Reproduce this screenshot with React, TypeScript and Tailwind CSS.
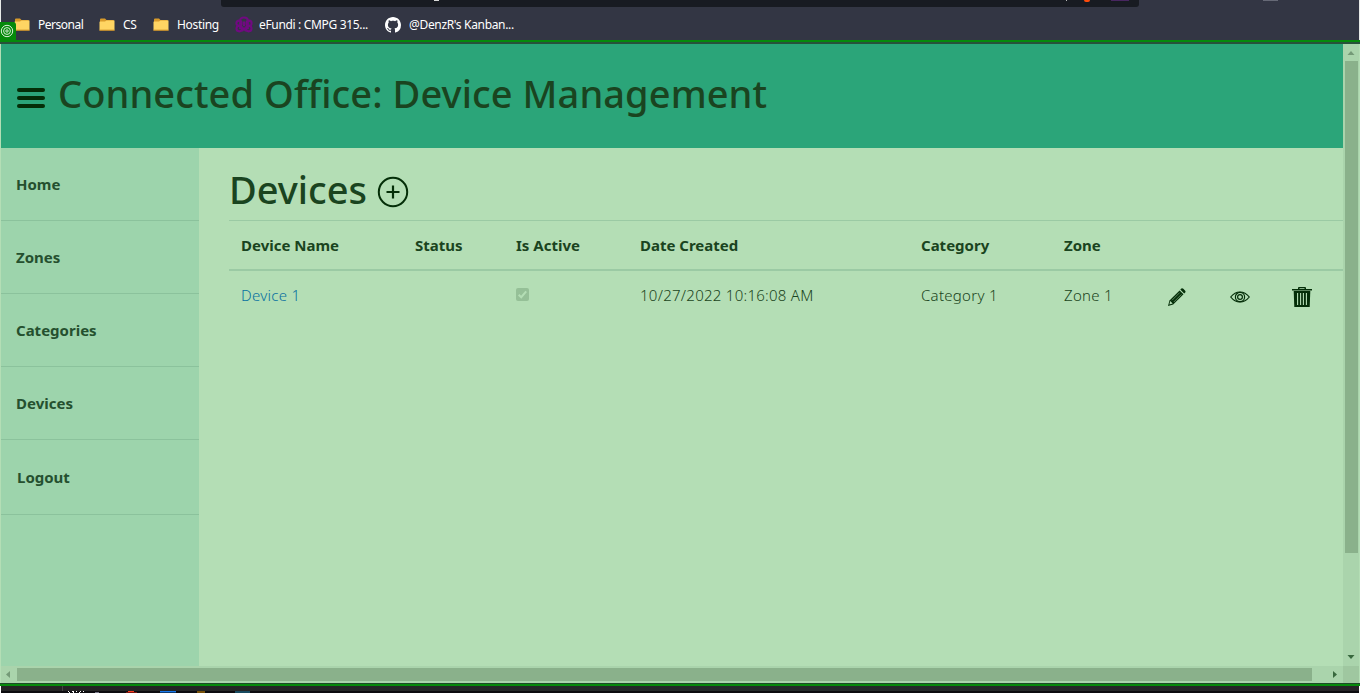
import React from 'react';

const Folder = () => (
  <svg width="16" height="14" viewBox="0 0 16 14" className="block shrink-0">
    <path d="M1 1.5Q1 .5 2 .5H6L7.5 2H14Q15 2 15 3V12H1Z" fill="#d99b2b" />
    <path d="M.5 4Q.5 3.5 1 3.5H6L7.5 2.5H15.5V12.5H.5Z" fill="#ffd563" />
    <path d="M.5 12.2H15.5" stroke="#c98a22" />
  </svg>
);

const Knot = () => (
  <svg width="18" height="17" viewBox="0 0 18 17" className="block shrink-0" fill="none" stroke="#700a80" strokeWidth="2.1">
    <path d="M5.2 13V4.5Q5.2 1.5 9 1.5T12.8 4.5V13" />
    <circle cx="4" cy="7.2" r="2.6" /><circle cx="14" cy="7.2" r="2.6" />
    <circle cx="4.3" cy="12.6" r="2.8" /><circle cx="13.7" cy="12.6" r="2.8" />
    <path d="M9 5.5V10M7 15L9 12.5L11 15" />
  </svg>
);

const Github = () => (
  <svg width="16" height="16" viewBox="0 0 16 16" className="block shrink-0" fill="#fff">
    <path d="M8 0C3.58 0 0 3.58 0 8c0 3.54 2.29 6.53 5.47 7.59.4.07.55-.17.55-.38 0-.19-.01-.82-.01-1.49-2.01.37-2.53-.49-2.69-.94-.09-.23-.48-.94-.82-1.13-.28-.15-.68-.52-.01-.53.63-.01 1.08.58 1.23.82.72 1.21 1.87.87 2.33.66.07-.52.28-.87.51-1.07-1.78-.2-3.64-.89-3.64-3.95 0-.87.31-1.59.82-2.15-.08-.2-.36-1.02.08-2.12 0 0 .67-.21 2.2.82.64-.18 1.32-.27 2-.27s1.36.09 2 .27c1.53-1.04 2.2-.82 2.2-.82.44 1.1.16 1.92.08 2.12.51.56.82 1.27.82 2.15 0 3.07-1.87 3.75-3.65 3.95.29.25.54.73.54 1.48 0 1.07-.01 1.93-.01 2.2 0 .21.15.46.55.38A8.01 8.01 0 0 0 16 8c0-4.42-3.58-8-8-8Z" />
  </svg>
);

const Pencil = () => (
  <svg width="20" height="20" viewBox="0 0 20 20" className="mt-[2px] block" fill="#042e08">
    <path d="M14.4 1.6Q15.2.8 16.3 1.8L18.2 3.7Q19 4.7 18.2 5.5L17.2 6.5L13.3 2.6Z" />
    <path d="M12.6 3.4L16.5 7.3L6.2 17.5L1 19L2.5 13.5Z" />
    <path d="M3.2 14.1L5.7 16.6L2.4 17.6Z" fill="#b4deb5" />
    <path d="M5 13.3L12.7 5.6M6.8 15L14.4 7.4" stroke="#b4deb5" strokeWidth=".5" />
  </svg>
);

const Eye = () => (
  <svg width="20" height="12" viewBox="0 0 20 12" className="mt-[2px] ml-px block" fill="none" stroke="#042e08" strokeWidth="1.2">
    <path d="M.7 6Q4.7 1 10 1T19.3 6Q15.3 11 10 11T.7 6Z" />
    <circle cx="10" cy="6" r="4.6" /><circle cx="10" cy="6" r="2.4" />
  </svg>
);

const Trash = () => (
  <svg width="20" height="20" viewBox="0 0 20 20" className="mt-[2px] ml-px block" fill="#042e08">
    <path d="M0 2H6V1Q6 0 7 0H13Q14 0 14 1V2H20V3.5H0ZM7.5 1.3V2H12.5V1.3Z" fillRule="evenodd" />
    <path d="M1.7 4H18.3L17.7 20H2.3Z" />
    <path d="M5.6 6V18M8.6 6V18M11.4 6V18M14.4 6V18" stroke="#b4deb5" strokeWidth="1.1" />
  </svg>
);

const bold = 'text-[15px] leading-6 font-bold whitespace-nowrap';

const navItems = [
  { label: 'Home', box: 'h-[73px] pl-[15px]' },
  { label: 'Zones', box: 'h-[73px] pl-[15px]' },
  { label: 'Categories', box: 'h-[73px] pl-[15px]' },
  { label: 'Devices', box: 'h-[73px] pl-[15px]' },
  { label: 'Logout', box: 'h-[75px] pl-4' },
];

const grid = 'grid grid-cols-[174px_101px_124px_281px_143px_103px_62px_62px_50px] pl-3';

export default function App() {
  return (
    <div className="flex h-[693px] w-[1360px] flex-col overflow-hidden bg-[#333644] font-['Noto_Sans','Open_Sans',sans-serif] text-[#1a4420]">
      <div className="relative flex h-10 shrink-0 flex-col border-x border-x-[#e8eae8] bg-[#333644]">
        <div className="ml-[220px] flex h-[7px] w-[918px] shrink-0 items-start rounded-b-[3px] bg-[#181b22]">
          <span className="ml-[213px] h-px w-[5px] bg-[#d8d8d8]" />
          <span className="ml-[627px] h-px w-px bg-[#bbb]" />
          <span className="ml-[17px] h-[2px] w-[6px] rounded-b-full bg-[#ff4b0b]" />
          <span className="ml-[21px] h-px w-[18px] bg-[#482660]" />
        </div>
        <div className="absolute top-0 left-[1262px] h-px w-[15px] bg-[#666976]" />
        <div className="flex h-[33px] items-center pt-[2px] pl-[13px] text-[12px] leading-4 tracking-[-0.33px] whitespace-nowrap text-white">
          <div className="flex w-[85px] items-center gap-[8px]"><Folder /><span className="tracking-[-0.5px]">Personal</span></div>
          <div className="flex w-[54px] items-center gap-[8px]"><Folder /><span>CS</span></div>
          <div className="flex w-[82px] items-center gap-[8px]"><Folder /><span>Hosting</span></div>
          <div className="flex w-[150px] items-center gap-[6px]"><Knot /><span>eFundi : CMPG 315...</span></div>
          <div className="flex items-center gap-[8px]"><Github /><span>@DenzR's Kanban...</span></div>
        </div>
        <div className="absolute top-[22px] left-[-1px] z-10 flex h-5 w-4 items-center rounded-tr-[3px] bg-[#058a0b]">
          <svg width="14" height="14" viewBox="0 0 14 14" className="-mt-[2px] block" fill="none" stroke="#d9efd9" strokeWidth="1">
            <circle cx="7" cy="7" r="5.7" /><circle cx="7" cy="7" r="3.4" /><circle cx="7" cy="7" r="1.2" />
          </svg>
        </div>
      </div>
      <div className="h-[2px] shrink-0 bg-[#058a0b]" />
      <div className="h-[2px] shrink-0 bg-[#27523a]" />

      <div className="flex h-[639px] shrink-0 flex-col border-x border-[#b4deb5] bg-[#aad4ac]">
        <div className="flex h-[622px]">
          <div className="flex w-[1342px] flex-col">
            <header className="flex h-[104px] items-start bg-[#2ba579] pl-4">
              <div className="mt-[44px] flex w-7 flex-col gap-[4px]">
                <span className="h-1 rounded-full bg-[#042e08]" />
                <span className="h-1 rounded-full bg-[#042e08]" />
                <span className="h-1 rounded-full bg-[#042e08]" />
              </div>
              <h1 className="mt-[25px] ml-[13px] text-[38px] leading-[48px] font-medium tracking-[0.08px] whitespace-nowrap">
                Connected Office: Device Management
              </h1>
            </header>
            <div className="flex h-[518px]">
              <nav className="w-[198px] shrink-0 bg-[#9dd4ac] text-[#25502f]">
                {navItems.map((n) => (
                  <div key={n.label} className={`flex items-center border-b border-[#8bc29c] ${n.box}`}>
                    <span className={bold}>{n.label}</span>
                  </div>
                ))}
              </nav>
              <main className="min-w-0 flex-1 bg-[#b4deb5] pl-[30px]">
                <div className="flex h-[72px] items-start">
                  <h1 className="mt-[17px] w-[138px] text-[38px] leading-[48px] font-medium">Devices</h1>
                  <svg width="32" height="32" viewBox="0 0 32 32" className="mt-7 ml-[10px] block" fill="none" stroke="#042e08">
                    <circle cx="16" cy="16" r="14.2" strokeWidth="2" />
                    <path d="M9.5 16H22.5M16 9.5V22.5" strokeWidth="2.2" />
                  </svg>
                </div>
                <div className={`${grid} ${bold} h-[51px] items-center border-t border-b-2 border-[#9bcaa4]`}>
                  <span>Device Name</span>
                  <span>Status</span>
                  <span>Is Active</span>
                  <span>Date Created</span>
                  <span>Category</span>
                  <span>Zone</span>
                </div>
                <div className={`${grid} h-[50px] items-center text-[15px] leading-6 font-[350] tracking-[0.27px] whitespace-nowrap`}>
                  <span className="mb-[2px] text-[#0871a0]">Device 1</span>
                  <span />
                  <span className="mb-[4px] flex h-[13px] w-[13px] items-center justify-center rounded-[2px] bg-[#95c097]">
                    <svg width="13" height="13" viewBox="0 0 13 13" fill="none" stroke="#b4deb5" strokeWidth="2"><path d="M2.7 6.7L5.2 9.2L10.2 3.3" /></svg>
                  </span>
                  <span className="mb-[2px]">10/27/2022 10:16:08 AM</span>
                  <span className="mb-[2px]">Category 1</span>
                  <span className="mb-[2px]">Zone 1</span>
                  <Pencil />
                  <Eye />
                  <Trash />
                </div>
              </main>
            </div>
          </div>
          <div className="flex w-4 flex-col items-center">
            <svg width="8" height="17" viewBox="0 0 8 17" className="block"><path d="M.5 11L4 7L7.5 11Z" fill="#749a77" /></svg>
            <div className="h-[492px] w-[13px] bg-[#8ab18b]" />
            <svg width="8" height="8" viewBox="0 0 8 8" className="mt-[100px] block"><path d="M.5 2H7.5L4 6Z" fill="#38683e" /></svg>
          </div>
        </div>
        <div className="flex h-[17px] items-center">
          <svg width="16" height="17" viewBox="0 0 16 17" className="block"><path d="M9 5V12L5 8.5Z" fill="#749a77" /></svg>
          <div className="h-[13px] w-[1295px] bg-[#8ab18b]" />
          <svg width="31" height="17" viewBox="0 0 31 17" className="block"><path d="M21 5V12L25 8.5Z" fill="#38683e" /></svg>
          <div className="h-[17px] w-4 bg-[#9fc7a0]" />
        </div>
      </div>
      <div className="h-px shrink-0 bg-[#1d4b27]" />
      <div className="h-[2px] shrink-0 bg-[#058a0b]" />
      <div className="h-[5px] shrink-0 border-x border-white bg-linear-to-r from-[#242424] from-5% via-[#242a2a] via-60% to-[#252326]">
        <div className="ml-[61px] h-full border-l border-[#444]" />
      </div>
      <div className="flex h-[2px] shrink-0 border-x border-white bg-[#0c0b0f]">
        <svg width="260" height="2" viewBox="0 0 260 2" className="block">
          <path d="M67 .5H68M71 .5H73M75 .5H76M79 .5H80M82 .5H83M68 1.5H69M72 1.5H73M78 1.5H79" stroke="#fff" />
          <path d="M94 1.5H98" stroke="#778" />
          <path d="M127 .5H133" stroke="#ff3d1e" />
          <path d="M125 1.5H136" stroke="#7e1710" />
          <path d="M159 .5H175" stroke="#1679ee" />
          <path d="M159 1.5H175" stroke="#0d3d75" />
          <path d="M196 1H204" stroke="#765008" strokeWidth="2" />
          <path d="M234 1H249" stroke="#174a60" strokeWidth="2" />
        </svg>
      </div>
    </div>
  );
}
